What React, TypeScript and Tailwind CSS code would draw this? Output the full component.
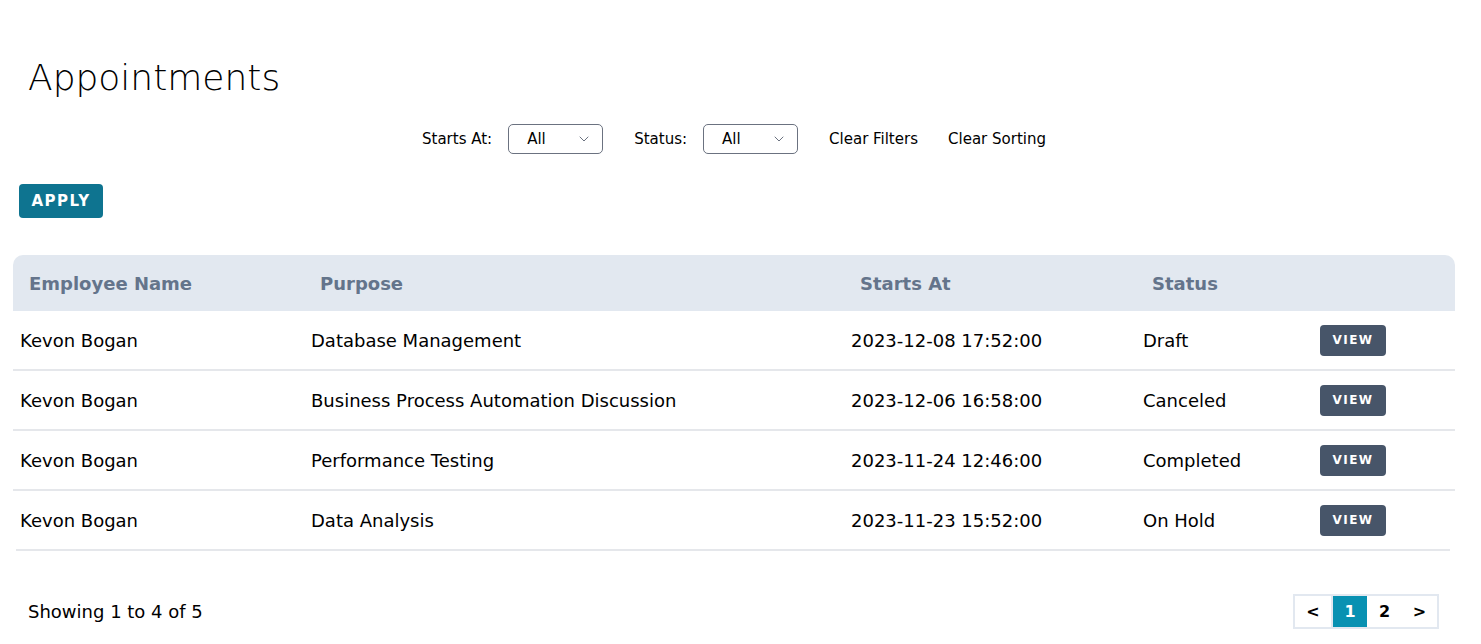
import { ChevronDown } from 'lucide-react';

const rows = [
  { name: 'Kevon Bogan', purpose: 'Database Management', startsAt: '2023-12-08 17:52:00', status: 'Draft' },
  { name: 'Kevon Bogan', purpose: 'Business Process Automation Discussion', startsAt: '2023-12-06 16:58:00', status: 'Canceled' },
  { name: 'Kevon Bogan', purpose: 'Performance Testing', startsAt: '2023-11-24 12:46:00', status: 'Completed' },
  { name: 'Kevon Bogan', purpose: 'Data Analysis', startsAt: '2023-11-23 15:52:00', status: 'On Hold' },
];

function FilterSelect() {
  return (
    <div className="flex items-center justify-between w-[95px] h-[30px] pl-[18px] pr-[10px] border border-[#6b7280] rounded-[5px] bg-white">
      <span>All</span>
      <ChevronDown className="w-[16px] h-[16px] text-[#6b7280]" strokeWidth={1.5} />
    </div>
  );
}

export default function App() {
  return (
    <div className="min-h-screen bg-white text-black font-['DejaVu_Sans',sans-serif]">
      <div className="pl-[13px] pr-[26px] pt-[54px]">
        {/* Title */}
        <h1 className="pl-[15px] text-[36px] leading-[48px] font-extralight">Appointments</h1>

        {/* Filters */}
        <div className="mt-[22px] flex items-center justify-center text-[16.7px] font-['DejaVu_Sans_Condensed','DejaVu_Sans',sans-serif]">
          <span className="mr-[16px]">Starts At:</span>
          <FilterSelect />
          <span className="ml-[31px] mr-[16px]">Status:</span>
          <FilterSelect />
          <span className="ml-[31px]">Clear Filters</span>
          <span className="ml-[30px]">Clear Sorting</span>
        </div>

        {/* Apply */}
        <button className="mt-[30px] ml-[6px] h-[34px] w-[84px] rounded-[4px] bg-[#0e7490] text-white text-[15px] font-bold tracking-[1.5px]">
          APPLY
        </button>

        {/* Table */}
        <div className="mt-[37px]">
          <div className="grid grid-cols-[291px_540px_292px_177px_1fr] h-[56px] items-center bg-[#e2e8f0] rounded-t-[10px] text-[18px] font-bold text-[#64748b]">
            <div className="pl-[16px]">Employee Name</div>
            <div className="pl-[16px]">Purpose</div>
            <div className="pl-[16px]">Starts At</div>
            <div className="pl-[16px]">Status</div>
            <div />
          </div>
          {rows.map((r, i) => (
            <div key={i}>
              <div className="grid grid-cols-[291px_540px_292px_177px_1fr] h-[58px] items-center text-[18px]">
                <div className="pl-[7px]">{r.name}</div>
                <div className="pl-[7px]">{r.purpose}</div>
                <div className="pl-[7px]">{r.startsAt}</div>
                <div className="pl-[7px]">{r.status}</div>
                <div className="pl-[7px]">
                  <button className="w-[66px] h-[31px] rounded-[4px] bg-[#475569] text-white text-[12px] font-bold tracking-[1.5px]">
                    VIEW
                  </button>
                </div>
              </div>
              <div className={i === rows.length - 1 ? 'ml-[3px] mr-[5px] h-[2px] bg-[#e5e7eb]' : 'h-[2px] bg-[#e5e7eb]'} />
            </div>
          ))}
        </div>

        {/* Footer */}
        <div className="mt-[43px] flex items-center justify-between">
          <span className="pl-[15px] text-[18px]">Showing 1 to 4 of 5</span>
          <div className="mr-[16px] flex border-2 border-[#e2e8f0] text-[16px] font-bold">
            <span className="w-[38px] h-[31px] flex items-center justify-center border-r-2 border-[#e2e8f0]">&lt;</span>
            <span className="w-[34px] h-[31px] flex items-center justify-center bg-[#0891b2] text-white">1</span>
            <span className="w-[35px] h-[31px] flex items-center justify-center">2</span>
            <span className="w-[35px] h-[31px] flex items-center justify-center">&gt;</span>
          </div>
        </div>
      </div>
    </div>
  );
}
